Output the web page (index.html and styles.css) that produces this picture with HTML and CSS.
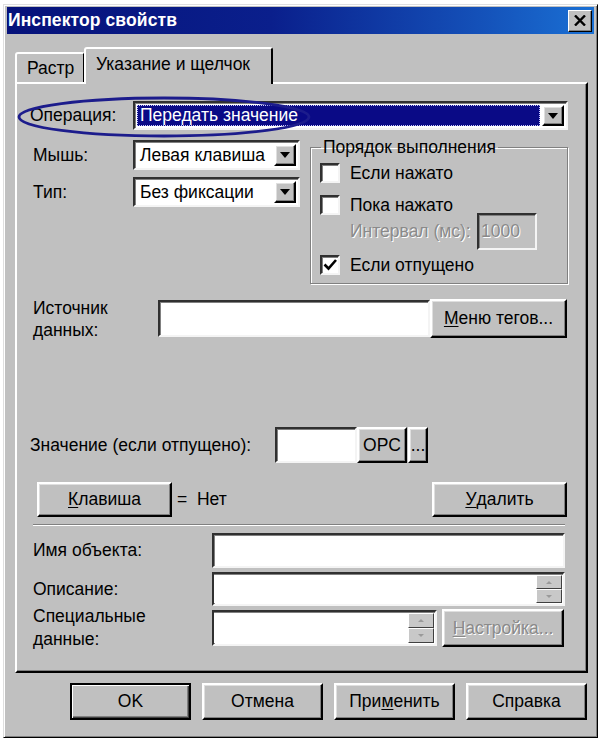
FILE: index.html
```html
<!DOCTYPE html>
<html lang="ru">
<head>
<meta charset="utf-8">
<title>Инспектор свойств</title>
<link rel="stylesheet" href="styles.css">
</head>
<body>
<div class="window">
  <div class="titlebar">
    <span class="title">Инспектор свойств</span>
    <span class="close"><svg width="12" height="11" viewBox="0 0 12 11"><path d="M1 0.5 L11 10.5 M11 0.5 L1 10.5" stroke="#000" stroke-width="2.4"/></svg></span>
  </div>
  <div class="tabs">
    <div class="tab">Растр</div>
    <div class="tab active">Указание и щелчок</div>
  </div>
  <div class="panel">
    <svg class="ellipse" width="294" height="44" viewBox="0 0 294 44"><ellipse cx="147" cy="22" rx="145" ry="19" fill="none" stroke="#1c1c8c" stroke-width="2.8"/></svg>
    <div class="row row-op">
      <span class="lbl lbl-op">Операция:</span>
      <div class="field combo combo-op">
        <span class="sel">Передать значение</span>
        <span class="btn dd"><span class="arrow"></span></span>
      </div>
    </div>
    <div class="mid">
      <div class="leftcol">
        <div class="row row-combo">
          <span class="lbl lbl-mid">Мышь:</span>
          <div class="field combo combo-sm">
            <span class="val">Левая клавиша</span>
            <span class="btn dd"><span class="arrow"></span></span>
          </div>
        </div>
        <div class="row row-combo row-type">
          <span class="lbl lbl-mid">Тип:</span>
          <div class="field combo combo-sm">
            <span class="val">Без фиксации</span>
            <span class="btn dd"><span class="arrow"></span></span>
          </div>
        </div>
      </div>
      <fieldset class="group">
        <legend>Порядок выполнения</legend>
        <div class="chk-row"><span class="chk"></span><span>Если нажато</span></div>
        <div class="chk-row chk-second"><span class="chk"></span><span>Пока нажато</span></div>
        <div class="interval"><span class="disabled ilbl">Интервал (мс):</span><span class="field ifield">1000</span></div>
        <div class="chk-row chk-third"><span class="chk"><svg width="16" height="16" viewBox="0 0 16 16"><path d="M2.5 7.5 L6.5 11.5 L14 3" fill="none" stroke="#000" stroke-width="2.6"/></svg></span><span>Если отпущено</span></div>
      </fieldset>
    </div>
    <div class="row row-src">
      <span class="lbl lbl-src">Источник<br>данных:</span>
      <span class="field input-src"></span>
      <span class="btn pbtn btn-tags"><u>М</u>еню тегов...</span>
    </div>
    <div class="row row-val">
      <span class="lbl lbl-val">Значение (если отпущено):</span>
      <span class="field input-val"></span>
      <span class="btn pbtn btn-opc">OPC</span>
      <span class="btn pbtn btn-dots">...</span>
    </div>
    <div class="row row-keys">
      <span class="btn pbtn btn-key"><u>К</u>лавиша</span>
      <span class="eq">= &nbsp;Нет</span>
      <span class="btn pbtn btn-del"><u>У</u>далить</span>
    </div>
    <div class="sep"></div>
    <div class="row row-name">
      <span class="lbl lbl-low">Имя объекта:</span>
      <span class="field input-name"></span>
    </div>
    <div class="row row-desc">
      <span class="lbl lbl-low">Описание:</span>
      <div class="field input-desc">
        <div class="fill"></div>
        <div class="spin"><div class="sbtn"><span class="sup"></span></div><div class="sbtn"><span class="sdown"></span></div></div>
      </div>
    </div>
    <div class="row row-spec">
      <span class="lbl lbl-low lbl-two">Специальные<br>данные:</span>
      <div class="field input-spec">
        <div class="fill"></div>
        <div class="spin"><div class="sbtn"><span class="sup"></span></div><div class="sbtn"><span class="sdown"></span></div></div>
      </div>
      <span class="btn pbtn btn-setup disabled"><u>Н</u>астройка...</span>
    </div>
  </div>
  <div class="buttons">
    <span class="btn pbtn dbtn default">OK</span>
    <span class="btn pbtn dbtn">Отмена</span>
    <span class="btn pbtn dbtn">При<u>м</u>енить</span>
    <span class="btn pbtn dbtn">Справка</span>
  </div>
</div>
</body>
</html>
```

FILE: styles.css
```css
* { box-sizing: border-box; }
body {
  margin: 0;
  background: #fff;
  font-family: "Liberation Sans", Arial, sans-serif;
  font-size: 17.5px;
  color: #000;
}
u { text-decoration: underline; text-underline-offset: 2px; }

.window {
  margin: 4px 0 0 3px;
  width: 595px;
  height: 734px;
  background: #c0c0c0;
  padding: 2px 3px 3px 3px;
  border: 1px solid;
  border-color: #dfdfdf #000 #000 #dfdfdf;
  box-shadow: inset 1px 1px #fff, inset -1px -1px #808080;
}

.titlebar {
  height: 27px;
  display: flex;
  align-items: center;
  justify-content: space-between;
  padding: 0 2px 0 1px;
  background: linear-gradient(to right, #06127a 0%, #0a1f8c 45%, #1450b8 80%, #1a70d4 100%);
}
.title {
  color: #fff;
  font-weight: bold;
  font-size: 17.5px;
  letter-spacing: 0.1px;
}
.close {
  width: 24px;
  height: 22px;
  background: #c0c0c0;
  display: flex;
  align-items: center;
  justify-content: center;
  border: 1px solid;
  border-color: #fff #000 #000 #fff;
  box-shadow: inset -1px -1px #808080;
}

.tabs {
  margin: 13px 0 0 8px;
  height: 35px;
  display: flex;
  align-items: flex-end;
}
.tab {
  height: 30px;
  width: 70px;
  padding-left: 10px;
  display: flex;
  align-items: center;
  border: 2px solid;
  border-bottom: none;
  border-color: #fff #000 transparent #fff;
  border-radius: 3px 3px 0 0;
  background: #c0c0c0;
}
.tab.active {
  position: relative;
  z-index: 1;
  height: 37px;
  width: 189px;
  margin-left: -1px;
  margin-bottom: -2px;
  padding: 0 0 5px 10px;
}

.panel {
  position: relative;
  margin-left: 8px;
  width: 573px;
  height: 591px;
  border: 2px solid;
  border-color: #fff #000 #000 #fff;
  box-shadow: inset -1px -1px #808080;
}
.ellipse {
  position: absolute;
  left: 0;
  top: 11px;
  z-index: 2;
  pointer-events: none;
}

.row { display: flex; align-items: center; }
.lbl { flex: none; }

.field {
  background: #fff;
  border: 2px solid;
  border-color: #303030 #f4f4f4 #f4f4f4 #303030;
  box-shadow: inset 1px 1px #808080;
}
.btn {
  background: #c0c0c0;
  border: 2px solid;
  border-color: #fff #000 #000 #fff;
  box-shadow: inset -1px -1px #808080, inset 1px 1px #dfdfdf;
}
.pbtn {
  display: flex;
  align-items: center;
  justify-content: center;
}
.combo {
  display: flex;
  align-items: center;
  padding: 2px;
}
.combo .val { flex: 1; padding-left: 3px; }
.dd {
  flex: none;
  width: 22px;
  height: 100%;
  display: flex;
  align-items: center;
  justify-content: center;
}
.arrow {
  width: 0;
  height: 0;
  border-left: 5px solid transparent;
  border-right: 5px solid transparent;
  border-top: 6px solid #000;
}

.row-op { margin-top: 17px; height: 29px; }
.lbl-op { width: 116px; padding-left: 13px; }
.combo-op { width: 435px; height: 29px; }
.sel {
  flex: 1;
  height: 100%;
  margin-right: 2px;
  background: #0a0a86;
  color: #fff;
  padding-left: 3px;
  display: flex;
  align-items: center;
  outline: 1px dotted #c8c8ff;
  outline-offset: -1px;
}

.mid { margin-top: 7px; height: 147px; display: flex; }
.leftcol { width: 283px; padding-top: 3px; }
.row-combo { height: 30px; }
.row-type { margin-top: 7px; }
.lbl-mid { width: 116px; padding-left: 16px; }
.combo-sm { width: 167px; height: 30px; }

.group {
  margin: 0 0 0 10px;
  width: 258px;
  height: 147px;
  padding: 6px 0 0 9px;
  border: 1px solid #808080;
  box-shadow: inset 1px 1px #fff, 1px 1px #fff;
}
.group legend {
  padding: 0 2px;
  margin-left: 1px;
  line-height: 20px;
}
.chk-row { display: flex; align-items: center; height: 20px; }
.chk-second { margin-top: 12px; }
.chk-third { margin-top: 5px; }
.chk {
  width: 20px;
  height: 20px;
  margin-right: 10px;
  background: #fff;
  border: 2px solid;
  border-color: #303030 #f4f4f4 #f4f4f4 #303030;
  box-shadow: inset 1px 1px #808080;
  display: flex;
  align-items: center;
  justify-content: center;
}
.interval {
  margin-top: -2px;
  height: 37px;
  display: flex;
  align-items: center;
  padding-left: 30px;
}
.disabled {
  color: #8a8a8a;
  text-shadow: 1px 1px #fff;
}
.ilbl { width: 127px; }
.ifield {
  width: 60px;
  height: 37px;
  background: #c0c0c0;
  color: #8a8a8a;
  text-shadow: 1px 1px #fff;
  display: flex;
  align-items: center;
  padding-left: 2px;
}

.row-src { margin-top: 16px; height: 37px; }
.lbl-src { width: 141px; padding-left: 16px; line-height: 22px; }
.input-src { width: 272px; height: 37px; }
.btn-tags { width: 137px; height: 39px; }

.row-val { margin-top: 90px; height: 36px; }
.lbl-val { width: 258px; padding-left: 13px; }
.input-val { width: 82px; height: 36px; }
.btn-opc { width: 50px; height: 36px; }
.btn-dots { width: 20px; height: 36px; margin-left: 1px; }

.row-keys { margin-top: 19px; height: 35px; }
.btn-key { width: 135px; height: 35px; margin-left: 20px; }
.eq { margin-left: 5px; }
.btn-del { width: 135px; height: 35px; margin-left: auto; margin-right: 19px; }

.sep {
  margin: 7px 21px 0 16px;
  height: 2px;
  border-top: 1px solid #808080;
  border-bottom: 1px solid #fff;
}

.row-name { margin-top: 7px; height: 35px; }
.lbl-low { width: 195px; padding-left: 16px; }
.lbl-two { line-height: 23px; }
.input-name { width: 353px; height: 35px; }

.row-desc { margin-top: 4px; height: 34px; }
.input-desc {
  width: 353px;
  height: 34px;
  display: flex;
  padding: 1px 1px 1px 0;
}
.row-spec { margin-top: 3px; height: 38px; }
.input-spec {
  width: 225px;
  height: 36px;
  display: flex;
  padding: 1px 1px 1px 0;
}
.fill { flex: 1; background: #fff; }
.spin { flex: none; width: 26px; display: flex; flex-direction: column; }
.sbtn {
  flex: 1;
  background: #c8c8c8;
  border: 1px solid;
  border-color: #fff #404040 #404040 #fff;
  display: flex;
  align-items: center;
  justify-content: center;
}
.sup, .sdown {
  width: 0;
  height: 0;
  border-left: 3px solid transparent;
  border-right: 3px solid transparent;
}
.sup { border-bottom: 3px solid #9a9a9a; }
.sdown { border-top: 3px solid #9a9a9a; }
.btn-setup { width: 122px; height: 38px; margin-left: 5px; }

.buttons {
  margin-top: 10px;
  padding-left: 63px;
  display: flex;
  gap: 11px;
}
.dbtn { width: 121px; height: 37px; }
.default {
  border: 2px solid #000;
  box-shadow: inset 1px 1px #fff, inset -1px -1px #404040, inset -2px -2px #808080;
}
```
